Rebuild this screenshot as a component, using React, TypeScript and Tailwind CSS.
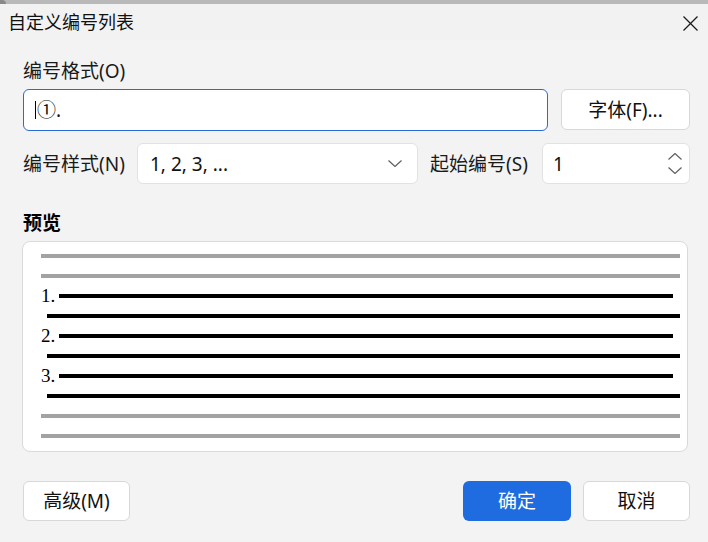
import React from "react";

const FONT = {
  fontFamily: '"Noto Sans", "Noto Sans CJK SC", sans-serif',
};

function Chevron({ dir }: { dir: "up" | "down" }) {
  return (
    <svg width="14" height="7" viewBox="0 0 14 7" fill="none">
      {dir === "down" ? (
        <polyline points="0.5,0.5 7,6.5 13.5,0.5" stroke="#5f5f5f" strokeWidth="1.2" />
      ) : (
        <polyline points="0.5,6.5 7,0.5 13.5,6.5" stroke="#5f5f5f" strokeWidth="1.2" />
      )}
    </svg>
  );
}

function GrayLine() {
  return <div className="h-[4px] bg-[#a2a2a2]" />;
}

function NumLine({ n }: { n: string }) {
  return (
    <div className="h-[4px] flex items-center">
      <span
        className="w-[18px] shrink-0 text-[19px] leading-none text-black relative top-[-1px]"
        style={{ fontFamily: '"Liberation Serif", serif' }}
      >
        {n}
      </span>
      <div className="h-[4px] flex-1 bg-black mr-[7px]" />
    </div>
  );
}

function ContLine() {
  return <div className="h-[4px] bg-black ml-[6px]" />;
}

export default function App() {
  return (
    <div
      className="w-[708px] h-[542px] bg-[#f3f3f3] overflow-hidden flex flex-col text-[#1a1a1a]"
      style={FONT}
    >
      {/* background strip behind the dialog */}
      <div className="h-[4px] shrink-0 bg-[#b9b9b9]">
        <div className="h-full w-[6px] bg-[#8a8a8a] rounded-tr-[4px]" />
      </div>

      {/* title bar */}
      <div className="h-[36px] flex items-center justify-between pl-[8px] pr-[10px] bg-[#f2f2f2] shrink-0">
        <span className="text-[18px] leading-[24px] text-[#111]">自定义编号列表</span>
        <svg width="15" height="15" viewBox="0 0 15 15" className="mt-[3px]">
          <line x1="0.5" y1="0.5" x2="14.5" y2="14.5" stroke="#1a1a1a" strokeWidth="1.3" />
          <line x1="14.5" y1="0.5" x2="0.5" y2="14.5" stroke="#1a1a1a" strokeWidth="1.3" />
        </svg>
      </div>

      {/* body */}
      <div className="flex flex-col pl-[23px] pr-[18px] pt-[18px]">
        <div className="h-[26px] text-[19px] leading-[26px]">编号格式(O)</div>

        <div className="mt-[5px] flex gap-[13px]">
          <div className="w-[525px] h-[42px] bg-white rounded-[6px] border-[1.5px] border-[#2a6ad6] flex items-center pl-[11px]">
            <span className="w-px h-[18px] bg-black mr-[1px]" />
            <span className="text-[19px] leading-[26px] text-[#111]">①.</span>
          </div>
          <button className="w-[129px] h-[41px] bg-white rounded-[6px] border border-[#d8d8d8] text-[19px] leading-[26px] flex items-center justify-center text-[#111]">
            字体(F)...
          </button>
        </div>

        <div className="mt-[12px] flex items-center">
          <div className="w-[114px] text-[19px] leading-[26px] whitespace-nowrap">编号样式(N)</div>
          <div className="w-[281px] h-[41px] bg-white rounded-[6px] border border-[#e2e2e2] flex items-center justify-between pl-[12px] pr-[15px]">
            <span className="text-[19px] leading-[26px] text-[#111]">1, 2, 3, ...</span>
            <Chevron dir="down" />
          </div>
          <div className="ml-[12px] w-[112px] text-[19px] leading-[26px] whitespace-nowrap">起始编号(S)</div>
          <div className="w-[148px] h-[41px] bg-white rounded-[6px] border border-[#e2e2e2] flex items-center justify-between pl-[10px] pr-[7px]">
            <span className="text-[19px] leading-[26px] text-[#111]">1</span>
            <div className="flex flex-col gap-[7px]">
              <Chevron dir="up" />
              <Chevron dir="down" />
            </div>
          </div>
        </div>

        <div className="mt-[26px] h-[26px] text-[19px] leading-[26px] font-bold text-black">预览</div>

        <div className="mt-[5px] -ml-px w-[666px] bg-white rounded-[8px] border border-[#dadada] pl-[18px] pr-[7px] pt-[12px] pb-[13px] flex flex-col gap-[16px]">
          <GrayLine />
          <GrayLine />
          <NumLine n="1." />
          <ContLine />
          <NumLine n="2." />
          <ContLine />
          <NumLine n="3." />
          <ContLine />
          <GrayLine />
          <GrayLine />
        </div>

        <div className="mt-[29px] flex items-center">
          <button className="w-[107px] h-[40px] bg-white rounded-[6px] border border-[#d8d8d8] text-[19px] leading-[26px] flex items-center justify-center text-[#111]">
            高级(M)
          </button>
          <div className="flex-1" />
          <button className="w-[108px] h-[40px] bg-[#1f6ce0] rounded-[6px] text-white text-[19px] leading-[26px] flex items-center justify-center">
            确定
          </button>
          <button className="ml-[12px] w-[107px] h-[40px] bg-white rounded-[6px] border border-[#d8d8d8] text-[19px] leading-[26px] flex items-center justify-center text-[#111]">
            取消
          </button>
        </div>
      </div>
    </div>
  );
}
